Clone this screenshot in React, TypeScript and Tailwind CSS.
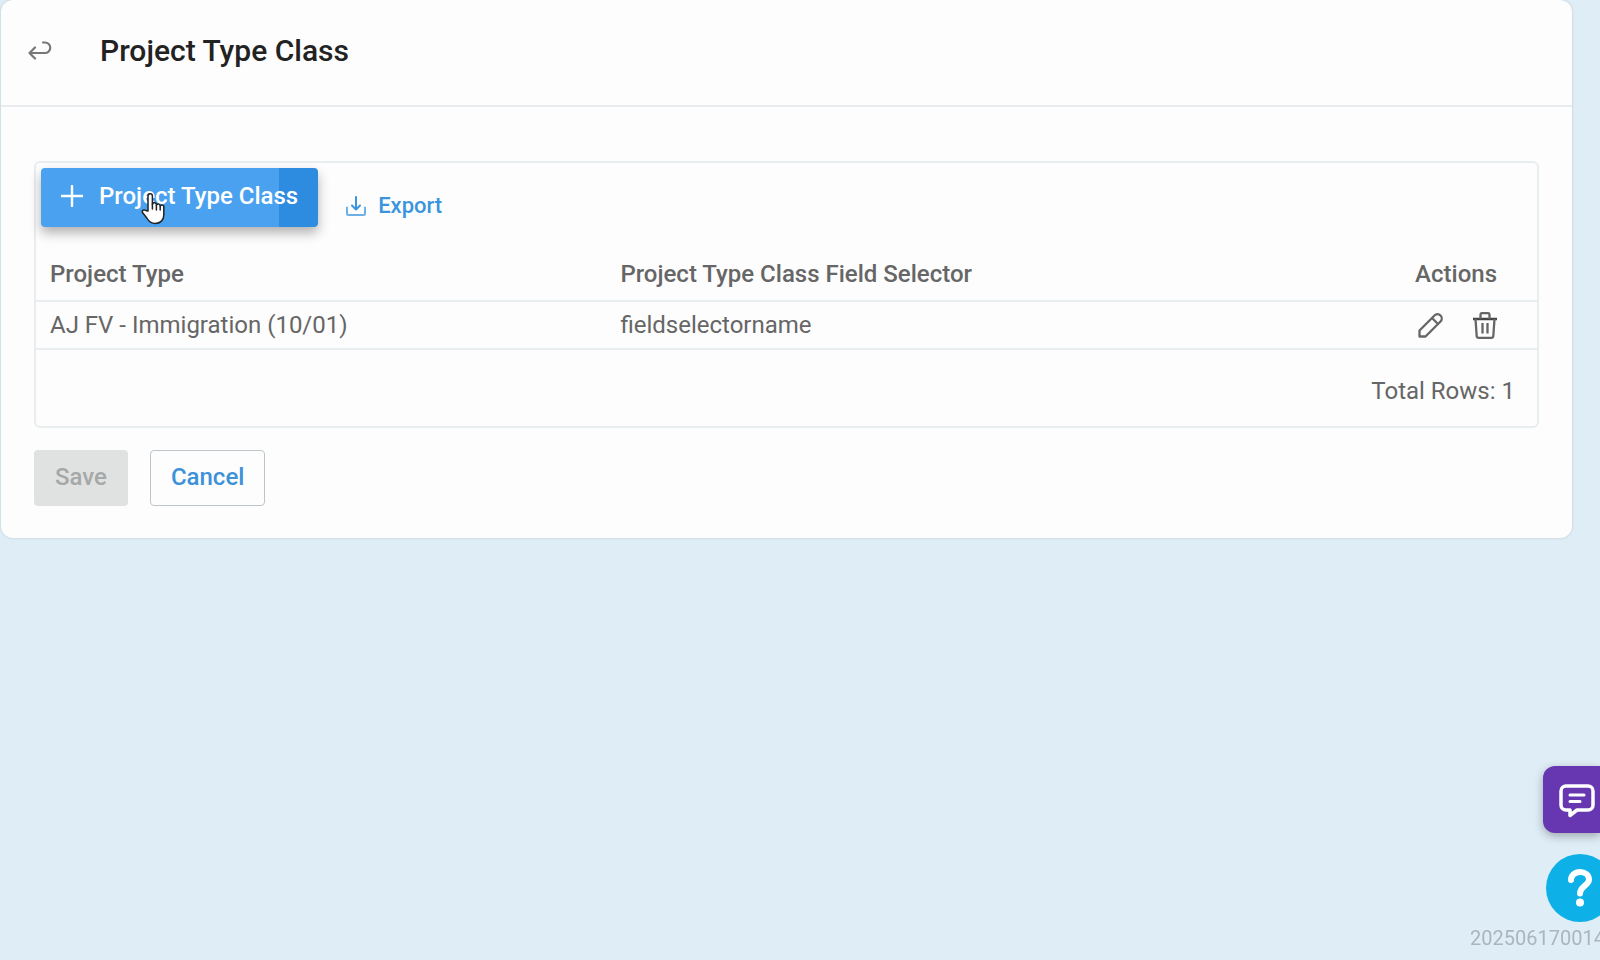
const rows = [{ type: "AJ FV - Immigration (10/01)", selector: "fieldselectorname" }];

const ReturnIcon = () => (
  <svg width="24" height="20" viewBox="0 0 24 20" fill="none" stroke="#777" strokeWidth="2.200" strokeLinecap="round" strokeLinejoin="round">
    <path d="M15 1.500h2a5.250 5.250 0 0 1 0 10.500H1.500M7 6.500 1.500 12 7 17.500" />
  </svg>
);

const PlusIcon = () => (
  <svg width="22" height="22" viewBox="0 0 22 22" fill="none" stroke="currentColor" strokeWidth="2.400">
    <path d="M11 0v22M0 11h22" />
  </svg>
);

const ExportIcon = () => (
  <svg width="20" height="20" viewBox="0 0 20 20" fill="none" stroke="currentColor" strokeWidth="2" strokeLinecap="round" strokeLinejoin="round">
    <path d="M10 1v12M6 9.500l4 4 4-4" />
    <path d="M1 11.500v6A1.500 1.500 0 0 0 2.500 19h15a1.500 1.500 0 0 0 1.500-1.500v-6" opacity=".75" />
  </svg>
);

const PencilIcon = () => (
  <svg width="25" height="25" viewBox="0 0 25 25" fill="none" stroke="currentColor" strokeWidth="2.300" strokeLinejoin="round">
    <path d="M1.500 17.500v6h6L22.500 8.500a4.200 4.200 0 0 0-6-6zM14 5l6 6" />
  </svg>
);

const TrashIcon = () => (
  <svg width="24" height="27" viewBox="0 0 24 27" fill="none" stroke="currentColor" strokeWidth="2.300" strokeLinejoin="round">
    <path d="M0 7h24" stroke="#444" strokeWidth="2.500" />
    <path d="M7.500 7V2.500A1.500 1.500 0 0 1 9 1.200h6a1.500 1.500 0 0 1 1.500 1.300V7M2.500 7l1.200 17a2 2 0 0 0 2 1.800h12.600a2 2 0 0 0 2-1.800L21.500 7M9.500 11v10.500M14.500 11v10.500" />
  </svg>
);

const ChatIcon = () => (
  <svg width="36" height="34" viewBox="0 0 36 34" fill="none" stroke="white" strokeWidth="3.500" strokeLinecap="round" strokeLinejoin="round">
    <path d="M7 2h22a5 5 0 0 1 5 5v14a5 5 0 0 1-5 5H18l-7 5.500V26H7a5 5 0 0 1-5-5V7a5 5 0 0 1 5-5z" />
    <path d="M11 11h14M11 17.500h10" strokeWidth="3" />
  </svg>
);

const QuestionIcon = () => (
  <svg width="26" height="38" viewBox="0 0 26 38" fill="none" stroke="white" strokeWidth="6" strokeLinecap="round" strokeLinejoin="round">
    <path d="M4 11c0-4.500 4-8 9-8s9 3 9 7.500c0 6-9 6.500-9 14" />
    <circle cx="13" cy="33.500" r="4" fill="white" stroke="none" />
  </svg>
);

const HandPointer = () => (
  <svg className="pointer-events-none absolute top-6 left-25" width="24" height="33" viewBox="0 0 24 33">
    <path
      d="M7 19V4a2.200 2.200 0 0 1 4.400 0v8.500a2 2 0 0 1 4 .7 2 2 0 0 1 3.800 1 1.900 1.900 0 0 1 3.600 1.200V23c0 5-3.500 8.500-8.500 8.500-4 0-6.500-2-8.500-5.500L1.500 20.500c-.8-1.600.8-3.200 2.500-2.300z"
      fill="white"
      stroke="#222"
      strokeWidth="1.500"
      strokeLinejoin="round"
    />
    <path d="M11.400 12v5M15.400 13.500V18M19.200 14.500V18" stroke="#222" strokeWidth="1.500" strokeLinecap="round" />
  </svg>
);

export default function App() {
  return (
    <div className="min-h-screen overflow-hidden bg-[#dfedf7] pr-7 pl-px font-['Roboto',sans-serif] text-2xl text-[#666]">
      <main className="rounded-xl bg-[#fdfdfd] pb-8 shadow-[0_0_3px_rgba(0,0,0,0.15)]">
        <header className="flex h-[107px] items-center gap-12 border-b-2 border-[#e9ecee] px-[27px] pb-1">
          <button aria-label="Back" className="flex w-6 justify-center">
            <ReturnIcon />
          </button>
          <h1 className="text-[30px] leading-9 font-medium text-[#222]">Project Type Class</h1>
        </header>

        <div className="px-[33px] pt-[54px]">
          <section className="rounded-md border-2 border-[#e8edef]">
            <div className="flex items-start gap-7 px-[5px] pt-[5px]">
              <div className="relative">
                <button className="flex h-[59px] items-center gap-4 rounded bg-linear-to-r from-[#49a1ef] from-86% to-[#2d8be0] to-86% px-5 pb-1 font-medium text-white shadow-[0_6px_12px_rgba(0,0,0,0.3)]">
                  <PlusIcon />
                  Project Type Class
                </button>
                <HandPointer />
              </div>
              <button className="mt-5 flex items-center gap-3 text-[22px] leading-9 font-medium text-[#3b95dd]">
                <ExportIcon />
                Export
              </button>
            </div>

            <table className="mt-5 w-full table-fixed text-left">
              <thead>
                <tr className="h-[54px] border-b-2 border-[#e8edef]">
                  <th className="w-[38%] pl-[14px] font-medium">Project Type</th>
                  <th className="pl-[14px] font-medium">Project Type Class Field Selector</th>
                  <th className="w-[160px] pr-10 text-right font-medium">Actions</th>
                </tr>
              </thead>
              <tbody>
                {rows.map((row) => (
                  <tr key={row.type} className="h-12 border-b-2 border-[#e8edef]">
                    <td className="pl-[14px]">{row.type}</td>
                    <td className="pl-[14px]">{row.selector}</td>
                    <td className="pr-10">
                      <div className="flex items-center justify-end gap-[30px]">
                        <button aria-label="Edit">
                          <PencilIcon />
                        </button>
                        <button aria-label="Delete">
                          <TrashIcon />
                        </button>
                      </div>
                    </td>
                  </tr>
                ))}
              </tbody>
            </table>
            <p className="flex h-19 items-center justify-end pt-1.5 pr-[22px]">Total Rows: {rows.length}</p>
          </section>

          <div className="mt-[22px] flex gap-[22px] font-medium">
            <button disabled className="h-14 rounded bg-[#e0e2e1] px-[21px] pb-0.5 text-[#a6a8a8]">
              Save
            </button>
            <button className="h-14 rounded border border-[#bcc5cb] px-5 pb-0.5 text-[#3c91d8]">Cancel</button>
          </div>
        </div>
      </main>

      <button
        aria-label="Chat"
        className="fixed right-0 bottom-[127px] flex h-[67px] w-[57px] items-center rounded-l-xl bg-[#6637b0] pt-0.5 pl-4 shadow-[0_3px_10px_rgba(0,0,0,0.3)]"
      >
        <ChatIcon />
      </button>
      <button
        aria-label="Help"
        className="fixed -right-3.5 bottom-[38px] flex size-17 items-center justify-center rounded-full bg-[#0eb0e8]"
      >
        <QuestionIcon />
      </button>
      <footer className="fixed right-0 bottom-1.5 w-[130px] text-[20px] leading-8 whitespace-nowrap text-[#abb4bf]">
        202506170014
      </footer>
    </div>
  );
}
